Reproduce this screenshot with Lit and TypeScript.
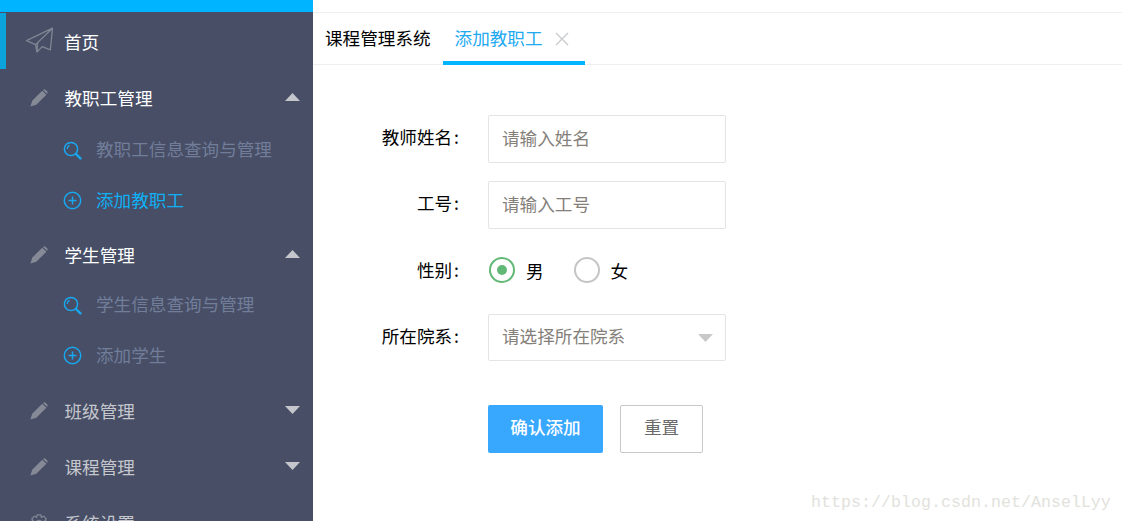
import { LitElement, html, css, svg } from "lit";
import { customElement } from "lit/decorators.js";

const plane = html`<svg class="plane" viewBox="0 0 30 26" width="30" height="26"><path d="M27.5 1.2 L1.5 13.6 L10.5 17.6 L12 25 L17.2 19.6 L25.4 22.8 Z M27.5 1.2 L10.5 17.6 M12 25 L12.6 16" fill="none" stroke="#7f8694" stroke-width="1.3" stroke-linejoin="round"/></svg>`;
const pencil = html`<svg class="ico" viewBox="0 0 20 20" width="18" height="18"><path d="M0.5 19.5 L2.4 13 L13.6 2 L18.2 6.4 L7 17.6 Z" fill="#858a96"/><path d="M14.8 0.9 Q16 -0.1 17.2 0.7 L19.2 2.7 Q20 3.9 19.2 5 L18.9 5.4 L14.4 1.2 Z" fill="#858a96"/></svg>`;
const gear = html`<svg class="ico" viewBox="0 0 20 20" width="18" height="18"><path d="M8 1 H12 L12.6 3.6 L15.2 2.4 L18 5.4 L16.4 7.6 L19.4 8.4 V12 L16.6 12.6 L18 15 L15 18 L12.6 16.4 L12 19.4 H8 L7.4 16.4 L5 18 L2 15 L3.4 12.6 L0.6 12 V8.4 L3.6 7.6 L2 5.4 L4.8 2.4 L7.4 3.6 Z" fill="none" stroke="#7f8694" stroke-width="1.4"/><circle cx="10" cy="10" r="3" fill="none" stroke="#7f8694" stroke-width="1.4"/></svg>`;
const search = html`<svg class="sub-ico low" viewBox="0 0 19 19" width="19" height="19"><circle cx="8" cy="8" r="6.6" fill="none" stroke="#18a8f0" stroke-width="1.5"/><path d="M4.3 8 A3.8 3.8 0 0 1 6.6 4.4" fill="none" stroke="#18a8f0" stroke-width="1.2"/><path d="M13 13 L17.4 17.4" stroke="#18a8f0" stroke-width="2.4" stroke-linecap="round" fill="none"/></svg>`;
const plus = html`<svg class="sub-ico" viewBox="0 0 19 19" width="19" height="19"><circle cx="9.5" cy="9.5" r="8.2" fill="none" stroke="#18a8f0" stroke-width="1.5"/><path d="M9.5 5.5 V13.5 M5.5 9.5 H13.5" stroke="#18a8f0" stroke-width="1.5" fill="none"/></svg>`;
const tri = (up: boolean) => svg`<svg class="tri" viewBox="0 0 15 8" width="15" height="8"><path d="${up ? "M7.5 0 L15 8 H0 Z" : "M0 0 H15 L7.5 8 Z"}" fill="#c4c6cb"/></svg>`;

@customElement("app-root")
export class AppRoot extends LitElement {
  static styles = css`
    :host {
      display: grid;
      grid-template-columns: 313px 1fr;
      width: 1122px;
      height: 521px;
      overflow: hidden;
      position: relative;
      background: #fff;
      font-family: "Noto Sans CJK SC", "Noto Sans", sans-serif;
      font-size: 17.6px;
      color: #000;
    }
    .side {
      background: #474e66;
      height: 521px;
      overflow: hidden;
    }
    .topbar {
      height: 12px;
      background: #00b4ff;
    }
    .home {
      margin-top: 1px;
      height: 56px;
      display: flex;
      align-items: center;
      border-left: 6px solid #0ba3dc;
      padding-left: 19px;
      color: #fff;
    }
    .plane {
      margin-right: 9px;
      margin-top: -3px;
    }
    .head {
      display: flex;
      align-items: center;
      height: 52px;
      margin-top: 2px;
      padding-left: 30px;
      color: #c5c7cc;
    }
    .head.open {
      color: #fff;
    }
    .head.second {
      margin-top: 5px;
      height: 48px;
    }
    .head.tail {
      margin-top: 4px;
    }
    .ico {
      margin: 2px 16.5px 0 0;
    }
    .tri {
      margin-left: auto;
      margin-right: 13px;
    }
    .head span {
      flex: none;
    }
    .sub {
      display: flex;
      align-items: center;
      height: 51px;
      padding-left: 63px;
      color: #717d99;
    }
    .sub.on {
      color: #0fb0f5;
    }
    .sub-ico {
      margin: 2px 14px 0 0;
    }
    .sub-ico.low {
      margin-top: 3px;
    }
    .main {
      display: flex;
      flex-direction: column;
      min-width: 0;
    }
    .tabs {
      margin-top: 12px;
      height: 51px;
      border-top: 1px solid #eeeeee;
      border-bottom: 1px solid #eeeeee;
      display: flex;
      align-items: stretch;
      padding-left: 12px;
    }
    .tab {
      display: flex;
      align-items: center;
      padding-bottom: 5px;
      height: 48px;
    }
    .tab.on {
      margin-left: 12px;
      padding: 0 13px 0 12px;
      height: 52px;
      width: 142px;
      box-sizing: border-box;
      color: #23a9f2;
      border-bottom: 4px solid #00b4ff;
    }
    .close {
      margin: 3px 0 0 12px;
    }
    .form {
      display: grid;
      grid-template-columns: 146px 238px;
      column-gap: 29px;
      row-gap: 18px;
      margin: 50px 0 0 0;
      align-items: center;
      justify-content: start;
    }
    label {
      text-align: right;
      margin-top: -5px;
    }
    .colon {
      margin-left: 2px;
    }
    .field {
      height: 48px;
      box-sizing: border-box;
      border: 1px solid #e4e4e4;
      border-radius: 2px;
      padding: 0 0 4px 13px;
      display: flex;
      align-items: center;
      color: #857f7a;
    }
    .field.sel {
      height: 47px;
      justify-content: space-between;
      padding-right: 12px;
    }
    .arrow {
      margin-top: 5px;
    }
    .radios {
      display: flex;
      align-items: center;
      height: 26px;
      padding-left: 1px;
      margin: 10px 0 13px;
    }
    .radio {
      width: 26px;
      height: 26px;
      box-sizing: border-box;
      border-radius: 50%;
      border: 2px solid #c5c5c5;
      display: flex;
      align-items: center;
      justify-content: center;
      margin-right: 11px;
    }
    .radio.on {
      border-color: #62b877;
    }
    .radio.on::after {
      content: "";
      width: 10px;
      height: 10px;
      border-radius: 50%;
      background: #62b877;
    }
    .r-text {
      margin-right: 30px;
    }
    .btns {
      grid-column: 2;
      display: flex;
      gap: 17px;
      margin-top: 26px;
    }
    .btn {
      height: 48px;
      box-sizing: border-box;
      border-radius: 2px;
      display: flex;
      align-items: center;
      justify-content: center;
      padding-bottom: 5px;
    }
    .btn.pri {
      width: 115px;
      background: #38a8ff;
      color: #fff;
      font-weight: 500;
    }
    .btn.sec {
      width: 83px;
      border: 1px solid #c8c8c8;
      color: #6b6b6b;
    }
    .mark {
      position: absolute;
      left: 811px;
      top: 493px;
      font-family: "Liberation Mono", monospace;
      font-size: 16.67px;
      color: #e2e2dc;
      white-space: nowrap;
    }
  `;

  render() {
    const colon = html`<span class="colon">:</span>`;
    return html`
      <aside class="side">
        <div class="topbar"></div>
        <div class="home">${plane}<span>首页</span></div>
        <div>
          <div class="head open">${pencil}<span>教职工管理</span>${tri(true)}</div>
          <div class="sub">${search}<span>教职工信息查询与管理</span></div>
          <div class="sub on">${plus}<span>添加教职工</span></div>
        </div>
        <div>
          <div class="head open second">${pencil}<span>学生管理</span>${tri(true)}</div>
          <div class="sub">${search}<span>学生信息查询与管理</span></div>
          <div class="sub">${plus}<span>添加学生</span></div>
        </div>
        <div class="head tail">${pencil}<span>班级管理</span>${tri(false)}</div>
        <div class="head tail">${pencil}<span>课程管理</span>${tri(false)}</div>
        <div class="head tail">${gear}<span>系统设置</span></div>
      </aside>
      <main class="main">
        <div class="tabs">
          <div class="tab">课程管理系统</div>
          <div class="tab on">
            <span>添加教职工</span>
            <svg class="close" viewBox="0 0 14 14" width="14" height="14"><path d="M1 1 L13 13 M13 1 L1 13" stroke="#c8cace" stroke-width="1.4" fill="none"/></svg>
          </div>
        </div>
        <div class="form">
          <label>教师姓名${colon}</label>
          <div class="field">请输入姓名</div>
          <label>工号${colon}</label>
          <div class="field">请输入工号</div>
          <label>性别${colon}</label>
          <div class="radios">
            <span class="radio on"></span><span class="r-text">男</span>
            <span class="radio"></span><span>女</span>
          </div>
          <label>所在院系${colon}</label>
          <div class="field sel">
            <span>请选择所在院系</span>
            <svg class="arrow" viewBox="0 0 15 8" width="15" height="8"><path d="M0 0 H15 L7.5 8 Z" fill="#c8c8c8"/></svg>
          </div>
          <div class="btns">
            <div class="btn pri">确认添加</div>
            <div class="btn sec">重置</div>
          </div>
        </div>
      </main>
      <div class="mark">https://blog.csdn.net/AnselLyy</div>
    `;
  }
}
